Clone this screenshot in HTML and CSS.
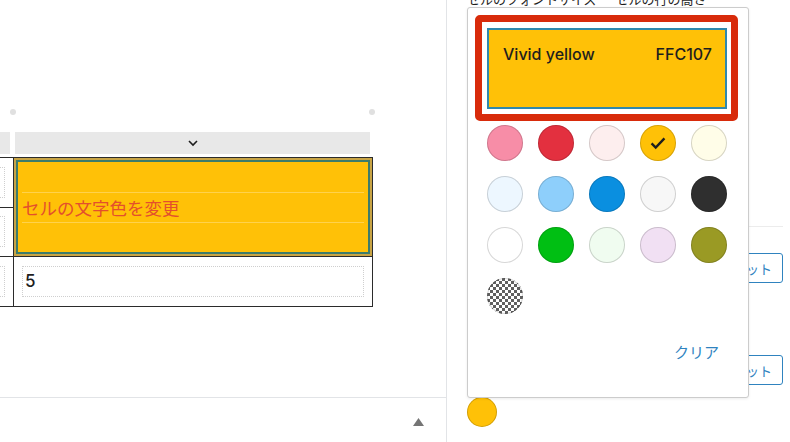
FILE: index.html
```html
<!DOCTYPE html>
<html lang="ja">
<head>
  <meta charset="UTF-8" />
  <title>テーブル セル設定</title>
  <link rel="stylesheet" href="styles.css">
</head>
<body>
  <div class="editor">
    <div class="canvas">
      <div class="block">
        <div class="dots"><span class="dot"></span><span class="dot"></span></div>
        <div class="col-bar">
          <div class="col-seg"></div>
          <div class="col-seg">
            <svg width="12" height="8" viewBox="0 0 12 8"><path d="M2 2l4 4 4-4" fill="none" stroke="#1e1e1e" stroke-width="1.6"/></svg>
          </div>
        </div>
        <table class="grid">
          <tr>
            <td class="cell"><div class="field"></div></td>
            <td class="cell is-yellow" rowspan="2">
              <div class="field field-soft">セルの文字色を変更</div>
            </td>
          </tr>
          <tr>
            <td class="cell"><div class="field"></div></td>
          </tr>
          <tr>
            <td class="cell"><div class="field"></div></td>
            <td class="cell"><div class="field">5</div></td>
          </tr>
        </table>
      </div>
    </div>
    <div class="footer">
      <svg width="11" height="8" viewBox="0 0 11 8"><path d="M5.5 0L11 8H0z" fill="#757575"/></svg>
    </div>
  </div>

  <div class="sidebar">
    <div class="sb-label">セルのフォントサイズ — セルの行の高さ</div>
    <div class="sb-section">
      <div class="sb-row"><button class="reset">リセット</button></div>
      <div class="sb-row sb-row-2"><button class="reset">リセット</button></div>
      <span class="current"></span>
    </div>

    <div class="popover">
      <div class="preview-frame">
        <div class="preview">
          <span>Vivid yellow</span>
          <span>FFC107</span>
        </div>
      </div>
      <div class="swatches">
        <span class="swatch" style="background:#f78da7"></span>
        <span class="swatch" style="background:#e3303f"></span>
        <span class="swatch" style="background:#fdeeee"></span>
        <span class="swatch is-picked" style="background:#ffc107">
          <svg width="22" height="22" viewBox="0 0 24 24"><path d="M5 12.5l4.5 4.5L19 7" fill="none" stroke="#1e1e1e" stroke-width="2.6"/></svg>
        </span>
        <span class="swatch" style="background:#fffde8"></span>
        <span class="swatch" style="background:#edf7ff"></span>
        <span class="swatch" style="background:#8ecffb"></span>
        <span class="swatch" style="background:#0a8fe0"></span>
        <span class="swatch" style="background:#f7f7f7"></span>
        <span class="swatch" style="background:#2f2f2f"></span>
        <span class="swatch" style="background:#ffffff"></span>
        <span class="swatch" style="background:#00bf13"></span>
        <span class="swatch" style="background:#f0fcf0"></span>
        <span class="swatch" style="background:#f1e0f3"></span>
        <span class="swatch" style="background:#9a9a24"></span>
        <span class="swatch swatch-clear"></span>
      </div>
      <div class="popover-foot"><button class="clear">クリア</button></div>
    </div>
  </div>
</body>
</html>
```

FILE: styles.css
```css
:root {
  --line: #e2e4e7;
  --ink: #1e1e1e;
  --accent: #2f83bf;
  --yellow: #ffc107;
}

body {
  margin: 0;
  width: 790px;
  height: 442px;
  overflow: hidden;
  display: flex;
  background: #fff;
  color: var(--ink);
  font-family: Inter, "Noto Sans CJK JP", sans-serif;
}

/* editor side */

.editor {
  width: 447px;
  box-sizing: border-box;
  border-right: 1px solid var(--line);
  display: flex;
  flex-direction: column;
}

.canvas {
  height: 397px;
  overflow: hidden;
  border-bottom: 1px solid var(--line);
}

.block {
  width: 422px;
  margin-left: -50px;
  padding-top: 109px;
}

.dots {
  display: flex;
  justify-content: space-between;
  margin: 0 -3px 0 60px;
}

.dot {
  width: 6px;
  height: 6px;
  border-radius: 50%;
  background: #e0e0e0;
}

.col-bar {
  display: grid;
  grid-template-columns: 63px 359px;
  margin-top: 17px;
}

.col-seg {
  height: 22px;
  background: #e8e8e8;
  margin: 0 2px;
  display: flex;
  align-items: center;
  justify-content: center;
}

.col-seg:first-child {
  margin: 0 3px 0 0;
}

.grid {
  margin-top: 3px;
  width: 423px;
  border-collapse: collapse;
  table-layout: fixed;
}

.cell {
  height: 49.5px;
  padding: 8px;
  border: 1px solid #2b2b2b;
  box-sizing: border-box;
}

.grid tr td:first-child {
  width: 63px;
}

.field {
  height: 31px;
  box-sizing: border-box;
  border: 1px dotted #cfcfcf;
  display: flex;
  align-items: center;
  padding-left: 2px;
  font-size: 17px;
  font-weight: 500;
  color: var(--ink);
}

.is-yellow {
  background: var(--yellow);
  box-shadow: inset 0 0 0 2px #c8a445, inset 0 0 0 4px #3c7c6b;
}

.field-soft {
  border: 0;
  border-top: 1px solid rgba(255, 255, 255, 0.28);
  border-bottom: 1px solid rgba(255, 255, 255, 0.28);
  padding-left: 0;
  color: #e44f2c;
  font-family: "Noto Sans CJK JP", sans-serif;
  font-size: 17.5px;
  font-weight: 400;
}

.footer {
  flex: 1;
  display: flex;
  justify-content: flex-end;
  align-items: center;
  padding: 3px 22px 0 0;
}

/* sidebar */

.sidebar {
  flex: 1;
  position: relative;
  padding: 0 7px 0 20px;
}

.sb-label {
  margin-top: -8px;
  font-size: 13px;
  line-height: 14px;
  font-family: "Noto Sans CJK JP", sans-serif;
}

.sb-section {
  margin-top: 220px;
  border-top: 1px solid #ececec;
}

.sb-row {
  display: flex;
  justify-content: flex-end;
  margin-top: 26px;
}

.sb-row-2 {
  margin-top: 72px;
}

.reset {
  height: 30px;
  padding: 0 10px;
  border: 1px solid var(--accent);
  border-radius: 3px;
  background: #fff;
  color: var(--accent);
  font-family: "Noto Sans CJK JP", sans-serif;
  font-size: 13px;
}

.current {
  display: block;
  width: 30px;
  height: 30px;
  margin-top: 12px;
  border-radius: 50%;
  background: var(--yellow);
  box-shadow: inset 0 0 0 1px rgba(0, 0, 0, 0.18);
}

/* color popover */

.popover {
  position: absolute;
  left: 20px;
  top: 7px;
  width: 282px;
  height: 391px;
  box-sizing: border-box;
  padding: 7px;
  background: #fff;
  border: 1px solid #cccccc;
  border-radius: 3px;
  box-shadow: 0 1px 3px rgba(0, 0, 0, 0.08);
  display: flex;
  flex-direction: column;
}

.preview-frame {
  width: 263px;
  box-sizing: border-box;
  border: 7px solid #d82b0b;
  border-radius: 5px;
  padding: 6px 4px 5px 5px;
}

.preview {
  height: 81px;
  box-sizing: border-box;
  border: 2px solid #2f88ad;
  background: var(--yellow);
  display: flex;
  justify-content: space-between;
  align-items: flex-start;
  padding: 14px 13px 0 14px;
  font-size: 16px;
  line-height: 20px;
  font-weight: 500;
  color: #1e1e1e;
}

.swatches {
  display: grid;
  grid-template-columns: repeat(5, 36px);
  gap: 15px;
  margin: 4px 0 0 12px;
}

.swatch {
  width: 36px;
  height: 36px;
  border-radius: 50%;
  box-shadow: inset 0 0 0 1px rgba(0, 0, 0, 0.16);
  display: flex;
  align-items: center;
  justify-content: center;
}

.swatch-clear {
  background: repeating-conic-gradient(#606060 0 25%, #fff 0 50%) 0 0 / 6px 6px;
}

.popover-foot {
  display: flex;
  justify-content: flex-end;
  margin-top: 27px;
  padding-right: 22px;
}

.clear {
  border: 0;
  background: none;
  padding: 0;
  color: var(--accent);
  font-family: "Noto Sans CJK JP", sans-serif;
  font-size: 15px;
  line-height: 22px;
}
```
